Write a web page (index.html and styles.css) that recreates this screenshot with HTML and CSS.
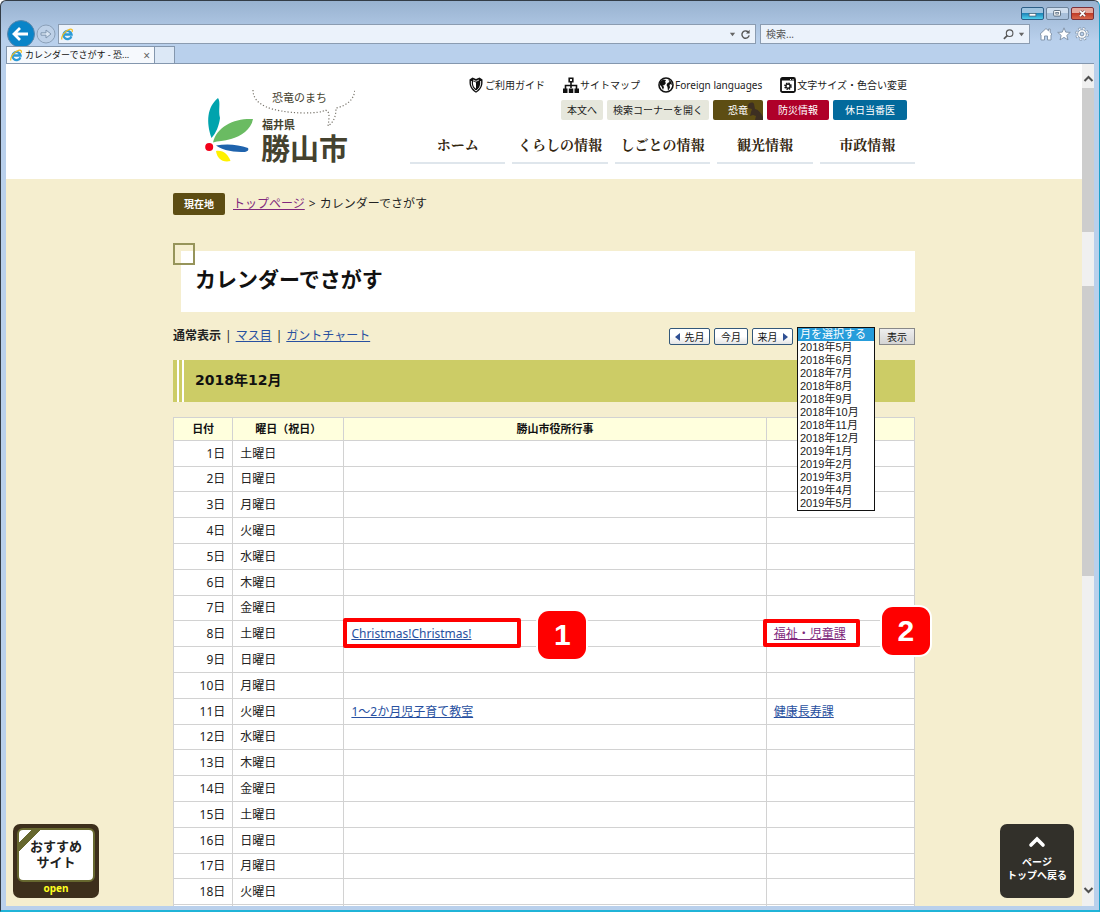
FILE: index.html
```html
<!DOCTYPE html>
<html lang="ja">
<head>
<meta charset="utf-8">
<title>カレンダーでさがす - 恐竜のまち 福井県勝山市</title>
<link rel="stylesheet" href="styles.css">
</head>
<body>
<svg class="defs" aria-hidden="true">
  <symbol id="ie" viewBox="0 0 16 16">
    <path d="M12.8 10.2A5 5 0 1 1 13 8H4.5" fill="none" stroke="#2b9ad6" stroke-width="2.8"/>
    <path d="M1.2 14.2C-.5 11 5 3 10.500 1.600c3-.7 4.200.8 3 3.200" fill="none" stroke="#f2bd22" stroke-width="1.500"/>
  </symbol>
</svg>
<div class="window">
  <div class="chrome">
    <div class="caption">
      <button class="cap cap-min" aria-label="最小化"><svg viewBox="0 0 24 13"><rect x="8" y="6.500" width="8" height="3" fill="#fff" stroke="#45596b" stroke-width=".8"/></svg></button>
      <button class="cap" aria-label="最大化"><svg viewBox="0 0 24 13"><rect x="7.500" y="3" width="8" height="6.500" rx="1" fill="#fff" stroke="#45596b"/><rect x="10" y="5.200" width="3" height="2" fill="#dbe6f2" stroke="#45596b" stroke-width=".8"/></svg></button>
      <button class="cap cap-close" aria-label="閉じる"><svg viewBox="0 0 24 13"><path d="M9 3.500l6 6M15 3.500l-6 6" stroke="#6b3a38" stroke-width="3.400"/><path d="M9 3.500l6 6M15 3.500l-6 6" stroke="#fff" stroke-width="2"/></svg></button>
    </div>
    <div class="address-row">
      <button class="back" aria-label="戻る"><svg viewBox="0 0 28 28"><circle cx="14" cy="14" r="13.500" fill="#0a84c8" stroke="#5a86aa"/><path d="M7 14h14M13 8l-6 6 6 6" fill="none" stroke="#fff" stroke-width="2.800"/></svg></button>
      <button class="forward" aria-label="進む"><svg viewBox="0 0 20 20"><circle cx="10" cy="10" r="9" fill="#bdd0e7" stroke="#8ba0b8"/><path d="M5 8.800h5V6l5 4-5 4v-2.800H5z" fill="#d8e4f2" stroke="#8197b0"/></svg></button>
      <div class="field address">
        <svg class="ie" aria-hidden="true"><use href="#ie"/></svg>
        <input type="text" aria-label="アドレス">
        <svg class="tiny" viewBox="0 0 8 8"><path d="M1 2h6L4 6z" fill="#666"/></svg>
        <svg class="glyph" viewBox="0 0 12 12"><path d="M9.500 4A4 4 0 1 0 10 7" fill="none" stroke="#555" stroke-width="1.500"/><path d="M10.500.8v4H6.600z" fill="#555"/></svg>
      </div>
      <div class="field search">
        <input type="text" placeholder="検索..." aria-label="検索">
        <svg class="glyph" viewBox="0 0 12 12"><circle cx="7.200" cy="4.600" r="3.600" fill="none" stroke="#555" stroke-width="1.200"/><path d="M4.600 7.200L1 10.800" stroke="#555" stroke-width="1.800"/></svg>
        <svg class="tiny" viewBox="0 0 8 8"><path d="M1 2h6L4 6z" fill="#666"/></svg>
      </div>
      <div class="tools">
        <svg viewBox="0 0 14 14"><path d="M1 7.200L7 1.500l2.500 2.300V2h1.700v3.500L13 7.200l-1 .8v5H8.500V9h-3v4H2V8z" fill="#fff" stroke="#8496ab"/></svg>
        <svg viewBox="0 0 14 14"><path d="M7 .8l1.700 4.300 4.600.3-3.500 3 1.200 4.500L7 10.400l-4 2.500 1.200-4.500-3.500-3 4.600-.3z" fill="#fff" stroke="#8496ab"/></svg>
        <svg viewBox="0 0 14 14"><circle cx="7" cy="7" r="5.400" fill="none" stroke="#8496ab" stroke-width="2.800" stroke-dasharray="2.400 1.840"/><circle cx="7" cy="7" r="5.200" fill="none" stroke="#fff" stroke-width="1.600" stroke-dasharray="1.800 2.280" stroke-dashoffset="-.3"/><circle cx="7" cy="7" r="4.300" fill="#fff" stroke="#8496ab" stroke-width=".8"/><circle cx="7" cy="7" r="1.900" fill="#b9cfea" stroke="#8496ab"/></svg>
      </div>
    </div>
    <div class="tabs">
      <div class="tab"><svg class="ie" aria-hidden="true"><use href="#ie"/></svg><span>カレンダーでさがす - 恐...</span><button aria-label="タブを閉じる">×</button></div>
      <button class="new-tab" aria-label="新しいタブ"></button>
    </div>
  </div>
  <div class="viewport">
    <div class="page">
      <header class="site-header">
        <div class="container header-in">
          <svg class="logo" viewBox="0 0 150 80" role="img" aria-label="恐竜のまち 福井県勝山市">
            <path d="M6.500 50C1 34 2 19 13 10c3 4 0 12 2 20-1 8-4 15-8.500 20z" fill="#00a3ad"/>
            <path d="M8 54.500C12 38 30 30 48 31 46 42 36 48 26 51 19 53 13 53 8 54.500z" fill="#6abb62"/>
            <circle cx="4.200" cy="59" r="4" fill="#f20019"/>
            <path d="M11 57.500c11-2 22-1 32 2.500 1 2 0 3-3 4-10 0-22-1-29-6.500z" fill="#1f63ad"/>
            <path d="M11 63c8-1 12 4 14.500 10C17 75 12 70 11 63z" fill="#fff100"/>
            <path d="M48 2C48 17 66 24 98 25q19 0 22-3c4 1 5 4 3 16 6-4 8-10 8-18 10-2 18-8 19-18" fill="none" stroke="#77736a" stroke-width="1.200" stroke-dasharray="1.200 2"/>
            <text class="logo-s" x="67" y="14">恐竜のまち</text>
            <text class="logo-m" x="57" y="41">福井県</text>
            <text class="logo-l" x="56" y="72">勝山市</text>
          </svg>
          <div class="header-nav">
            <div class="util">
              <a href="#"><svg viewBox="0 0 16 16"><path d="M8 15.800C3.500 13 1.800 10 1.500 6V2.500L4.500.5 8 2l3.500-1.500 3 2V6c-.3 4-2 7-6.500 9.800z" fill="#111"/><path d="M3.400 4v3c.3 2.800 1.800 5 4.600 7 2.800-2 4.300-4.200 4.600-7V4" fill="none" stroke="#fff" stroke-width=".9"/><path d="M5 4.200L8 5.500v6.200C6 10.400 5 8.700 5 6.500z" fill="#fff"/><path d="M5 3l3 1.300L11 3" fill="none" stroke="#fff" stroke-width=".8"/></svg>ご利用ガイド</a>
              <a href="#"><svg viewBox="0 0 16 16"><path d="M6.200 1.200h3.600v3.600H6.200zM8 5v6M2.500 12V8.500h11V12" fill="none" stroke="#111" stroke-width="1.600"/><path d="M0 11.500h4.500V16H0zM5.800 11.500h4.500V16H5.800zM11.500 11.500H16V16h-4.500z" fill="#111"/></svg>サイトマップ</a>
              <a href="#"><svg viewBox="0 0 16 16"><circle cx="8" cy="8" r="7" fill="#fff" stroke="#111" stroke-width="1.600"/><path d="M2 5l3-2.500 3 .5-1 2 1 1-2 2.500-1.500-.5L6 10l-1 3-1.500-3.500L2 8zM10 2l3.500 3 .5 3-1.500-1-1 1 .5 2.500L10 14 9.500 10 8.500 8l1-2 2-1z" fill="#111"/></svg>Foreign languages</a>
              <a href="#"><svg viewBox="0 0 16 16"><rect x="1" y="1" width="14" height="14" rx="1.500" fill="#fff" stroke="#111" stroke-width="1.800"/><path d="M1 2.500h14" stroke="#111" stroke-width="2"/><path d="M10 2.500h1M12.500 2.500h1" stroke="#fff"/><circle cx="8" cy="9.200" r="2.700" fill="none" stroke="#111" stroke-width="2.200" stroke-dasharray="1.300 .82"/><circle cx="8" cy="9.200" r="2" fill="#fff" stroke="#111" stroke-width="1.200"/></svg>文字サイズ・色合い変更</a>
            </div>
            <div class="pills">
              <a class="pill" href="#">本文へ</a>
              <a class="pill" href="#">検索コーナーを開く</a>
              <a class="pill dino" href="#"><svg viewBox="0 0 16 20" aria-hidden="true"><path d="M1 5c2-3 5-3 6-1l1 5c4 1 6 4 8 8v3H8l1-4-3-1-3 1 1-4 1-3-4-1z" fill="#3d2f22"/></svg><span>恐竜</span></a>
              <a class="pill red" href="#">防災情報</a>
              <a class="pill blue" href="#">休日当番医</a>
            </div>
            <nav class="global">
              <a href="#">ホーム</a><a href="#">くらしの情報</a><a href="#">しごとの情報</a><a href="#">観光情報</a><a href="#">市政情報</a>
            </nav>
          </div>
        </div>
      </header>
      <main class="container main">
        <div class="crumbs"><span class="here">現在地</span><a class="visited" href="#">トップページ</a><span>&gt;</span><span>カレンダーでさがす</span></div>
        <h1>カレンダーでさがす</h1>
        <div class="controls">
          <div class="views"><strong>通常表示</strong><span>|</span><a href="#">マス目</a><span>|</span><a href="#">ガントチャート</a></div>
          <form class="months">
            <button class="month prev" type="button">先月</button>
            <button class="month" type="button">今月</button>
            <button class="month next" type="button">来月</button>
            <div class="picker">
              <select size="14" aria-label="月を選択する">
                <option selected>月を選択する</option>
                <option>2018年5月</option><option>2018年6月</option><option>2018年7月</option><option>2018年8月</option><option>2018年9月</option><option>2018年10月</option><option>2018年11月</option><option>2018年12月</option><option>2019年1月</option><option>2019年2月</option><option>2019年3月</option><option>2019年4月</option><option>2019年5月</option>
              </select>
            </div>
            <button class="show" type="button">表示</button>
          </form>
        </div>
        <h2>2018年12月</h2>
        <table>
          <colgroup><col class="c-date"><col class="c-day"><col class="c-event"><col class="c-dept"></colgroup>
          <thead><tr><th>日付</th><th>曜日（祝日）</th><th>勝山市役所行事</th><th></th></tr></thead>
          <tbody>
            <tr><td>1日</td><td>土曜日</td><td></td><td></td></tr>
            <tr><td>2日</td><td>日曜日</td><td></td><td></td></tr>
            <tr><td>3日</td><td>月曜日</td><td></td><td></td></tr>
            <tr><td>4日</td><td>火曜日</td><td></td><td></td></tr>
            <tr><td>5日</td><td>水曜日</td><td></td><td></td></tr>
            <tr><td>6日</td><td>木曜日</td><td></td><td></td></tr>
            <tr><td>7日</td><td>金曜日</td><td></td><td></td></tr>
            <tr><td>8日</td><td>土曜日</td><td><a href="#">Christmas!Christmas!</a><span class="frame frame-event"></span><span class="badge badge-event">1</span></td><td><a class="visited" href="#">福祉・児童課</a><span class="frame frame-dept"></span><span class="badge badge-dept">2</span></td></tr>
            <tr><td>9日</td><td>日曜日</td><td></td><td></td></tr>
            <tr><td>10日</td><td>月曜日</td><td></td><td></td></tr>
            <tr><td>11日</td><td>火曜日</td><td><a href="#">1～2か月児子育て教室</a></td><td><a href="#">健康長寿課</a></td></tr>
            <tr><td>12日</td><td>水曜日</td><td></td><td></td></tr>
            <tr><td>13日</td><td>木曜日</td><td></td><td></td></tr>
            <tr><td>14日</td><td>金曜日</td><td></td><td></td></tr>
            <tr><td>15日</td><td>土曜日</td><td></td><td></td></tr>
            <tr><td>16日</td><td>日曜日</td><td></td><td></td></tr>
            <tr><td>17日</td><td>月曜日</td><td></td><td></td></tr>
            <tr><td>18日</td><td>火曜日</td><td></td><td></td></tr>
            <tr><td></td><td></td><td></td><td></td></tr>
          </tbody>
        </table>
      </main>
      <button class="recommend"><span class="rec-card">おすすめ<br>サイト</span><span class="rec-open">open</span></button>
      <a class="to-top" href="#"><svg viewBox="0 0 18 12"><path d="M3 9l6-6 6 6" fill="none" stroke="#fff" stroke-width="3.600" stroke-linecap="round"/></svg>ページ<br>トップへ戻る</a>
    </div>
    <div class="scrollbar">
      <svg viewBox="0 0 11 8"><path d="M1.500 6l4-4 4 4" fill="none" stroke="#505050" stroke-width="2"/></svg>
      <div class="track"><span class="thumb"></span><span class="thumb"></span></div>
      <svg viewBox="0 0 11 8"><path d="M1.500 2l4 4 4-4" fill="none" stroke="#505050" stroke-width="2"/></svg>
    </div>
  </div>
</div>
</body>
</html>
```

FILE: styles.css
```css
*, *::before, *::after { box-sizing: border-box; }
body {
  margin: 0;
  font: 12px/18px "Noto Sans", "Noto Sans CJK JP", sans-serif;
  color: #222;
}
button { padding: 0; border: 0; background: none; font-family: inherit; }
a { color: #2850a0; }
a.visited { color: #80287c; }
svg { display: block; flex: none; }
.defs { position: absolute; width: 0; height: 0; }

/* browser window */
.window {
  display: flex;
  flex-direction: column;
  height: 100vh;
  padding: 0 5px 4px;
  border: 1px solid #333c46;
  border-bottom: 2px solid #20b4d8;
  border-right-color: #20a0c8;
  border-radius: 6px 6px 0 0;
  background: linear-gradient(#98b2d0, #b9d0ec 40px);
}
.chrome { padding-top: 6px; }
.caption { display: flex; justify-content: flex-end; gap: 2px; height: 17px; }
.cap {
  width: 23px;
  height: 13px;
  border: 1px solid #6c829a;
  border-radius: 2px;
  background: linear-gradient(#cfdeee 50%, #a8c0da 50%);
}
.cap svg { width: 100%; height: 100%; }
.cap-min { background: linear-gradient(#9fc4e0 45%, #1f86b8 50%, #4fd0ee); border-color: #2c5e86; }
.cap-close { background: linear-gradient(#e5a79b 45%, #c13c28 50%, #d8684c); border-color: #7c3038; }
.address-row { display: flex; align-items: center; height: 20px; }
.back svg { width: 28px; height: 28px; }
.back { margin-left: 1px; }
.forward { margin: 0 2px 0 1px; }
.forward svg { width: 20px; height: 20px; }
.field {
  display: flex;
  align-items: center;
  gap: 4px;
  height: 20px;
  padding: 0 4px 0 2px;
  border: 1px solid #8b9cb1;
  background: #ebf2fb;
}
.field input {
  flex: 1;
  min-width: 0;
  padding: 0 3px;
  border: 0;
  background: none;
  font: 10px/16px "Noto Sans", "Noto Sans CJK JP", sans-serif;
}
.field input::placeholder { color: #555; }
.address { flex: 1; }
.search { width: 270px; margin-left: 4px; }
.ie { width: 13px; height: 13px; }
.tiny { width: 7px; height: 7px; }
.glyph { width: 11px; height: 11px; }
.tools { display: flex; gap: 4px; margin: 0 5px 0 9px; }
.tools svg { width: 14px; height: 14px; }
.tabs { display: flex; height: 20px; padding-top: 2px; border-bottom: 1px solid #8497ae; }
.tab {
  position: relative;
  z-index: 1;
  display: flex;
  align-items: center;
  gap: 2px;
  width: 149px;
  padding: 0 4px 0 3px;
  border: 1px solid #8497ae;
  border-bottom: 0;
  background: #f6f9fd;
  font-size: 9px;
  white-space: nowrap;
  color: #111;
}
.tab button { margin-left: auto; color: #666; font-size: 12px; }
.new-tab { width: 20px; border: 1px solid #8497ae; border-width: 1px 1px 0 0; background: #dce8f6; }

/* scrolled area */
.viewport { display: flex; flex: 1; min-height: 0; overflow: hidden; }
.page { position: relative; flex: 1; min-width: 0; overflow: hidden; background: #f5eecf; }
.scrollbar {
  display: flex;
  flex-direction: column;
  align-items: center;
  width: 12px;
  padding: 11px 0 12px;
  background: #f0f0f0;
}
.scrollbar svg { width: 11px; height: 8px; }
.track { display: flex; flex: 1; flex-direction: column; gap: 54px; width: 100%; padding-top: 5px; }
.thumb { height: 144px; background: #cdcdcd; }
.thumb + .thumb { height: 290px; }

/* site header */
.container { width: 100%; max-width: 742px; margin: 0 auto; }
.site-header { background: #fff; }
.header-in { display: flex; justify-content: space-between; height: 115px; padding-left: 32px; }
.logo { width: 150px; height: 80px; margin-top: 24px; }
.logo text { font-family: "Noto Sans CJK JP", sans-serif; fill: #45422f; }
.logo-s { font-size: 11px; }
.logo-m { font-size: 11px; font-weight: 700; }
.logo-l { font-size: 29px; font-weight: 700; }
.header-nav { display: flex; flex-direction: column; width: 505px; padding-top: 13px; }
.util, .pills { display: flex; justify-content: flex-end; padding-right: 8px; }
.util { gap: 18px; font-size: 10px; line-height: 16px; }
.util a { display: flex; gap: 1px; color: #222; text-decoration: none; white-space: nowrap; }
.util svg { width: 16px; height: 16px; }
.pills { gap: 4px; margin-top: 7px; font-size: 10px; line-height: 20px; }
.pill { position: relative; padding: 0 6px; border-radius: 2px; background: #e6e7dc; color: #222; text-decoration: none; white-space: nowrap; }
.dino { padding: 0 15px; background: #5d4d13; color: #fff; }
.dino svg { position: absolute; right: 0; top: 0; width: 16px; height: 20px; }
.dino span { position: relative; }
.red { padding: 0 11px; background: #af0029; color: #fff; }
.blue { padding: 0 12px; background: #036a9c; color: #fff; }
.global { display: grid; grid-template-columns: repeat(5, 1fr); gap: 7px; margin-top: 12px; }
.global a {
  padding-bottom: 6px;
  border-bottom: 2px solid #dfe6ec;
  color: #33260f;
  font: 700 14px/24px "Noto Serif CJK JP", "Noto Sans CJK JP", serif;
  text-align: center;
  text-decoration: none;
}

/* main column */
.crumbs { display: flex; align-items: center; gap: 4px; padding-top: 14px; line-height: 20px; }
.here { margin-right: 4px; padding: 0 11px; border-radius: 2px; background: #5d4d13; color: #fff; font-size: 10px; font-weight: 700; line-height: 22px; }
h1 {
  position: relative;
  margin: 36px 0 0 8px;
  padding: 14px 14px 19px;
  background: #fff;
  color: #111;
  font-size: 21px;
  line-height: 28px;
}
h1::before { content: ""; position: absolute; left: -8px; top: -8px; width: 22px; height: 22px; border: 2px solid #96945a; }
.controls { display: flex; justify-content: space-between; height: 48px; padding-top: 14px; }
.views { display: flex; gap: 4px; line-height: 20px; }
.months { display: flex; gap: 4px; padding-top: 2px; }
.month, .show {
  display: flex;
  align-items: center;
  justify-content: center;
  gap: 5px;
  width: 34px;
  height: 17px;
  border: 1px solid #33587a;
  border-radius: 2px;
  background: linear-gradient(#fff 50%, #e4e4e4);
  color: #111;
  font-size: 10px;
}
.prev, .next { width: 41px; }
.prev::before, .next::after { content: ""; border: 4px solid transparent; }
.prev::before { border-left: 0; border-right: 5px solid #2f4f93; }
.next::after { border-right: 0; border-left: 5px solid #2f4f93; }
.show { width: 36px; border-color: #888; border-radius: 0; background: linear-gradient(#eee, #d4d4d4); }
.picker { position: relative; width: 78px; height: 17px; }
select {
  position: absolute;
  z-index: 2;
  left: 0;
  top: -1px;
  width: 78px;
  height: 184px;
  padding: 0;
  border: 1px solid #111;
  outline: 0;
  border-radius: 0;
  overflow: hidden;
  background: #fff;
  color: #222;
  font: 11px/13px "Liberation Sans", "Noto Sans CJK JP", sans-serif;
}
option { display: flex; align-items: center; min-height: 13px; height: 13px; padding: 0 2px 3px; line-height: 13px; }
option:checked { background: #269ddb linear-gradient(#269ddb, #269ddb); color: #fff; }
h2 {
  margin: 0;
  padding: 0 22px 2px;
  background: linear-gradient(90deg, #cccc66 4px, #fff 4px 6px, #cccc66 6px 9px, #fff 9px 11px, #cccc66 11px);
  color: #111;
  font: 700 14px/40px "DejaVu Sans", "Noto Sans CJK JP", sans-serif;
}
table { width: 100%; margin-top: 15px; border: 1px solid #bbb; border-collapse: collapse; table-layout: fixed; background: #fff; }
.c-date { width: 8%; }
.c-day { width: 15%; }
.c-event { width: 57%; }
.c-dept { width: 20%; }
th, td { position: relative; height: 26px; padding: 0 7px; border: 1px solid #d2d2d2; text-align: left; line-height: 20px; }
th { height: 23px; padding: 0 4px; background: #ffffdd; color: #111; font-size: 11px; text-align: center; }
td:first-child { text-align: right; }
tbody tr:nth-child(5n+2) td { height: 25px; }

/* annotations over the table */
.frame { position: absolute; border: 4px solid #f00; border-radius: 2px; }
.frame-event { left: -1px; top: -3px; width: 178px; height: 30px; }
.frame-dept { left: -4px; top: -2px; width: 97px; height: 28px; }
.badge {
  position: absolute;
  z-index: 1;
  width: 48px;
  height: 48px;
  border-radius: 11px;
  background: #f00;
  box-shadow: 0 0 0 2px #fff;
  color: #fff;
  font: 700 30px/48px "Liberation Sans", sans-serif;
  text-align: center;
}
.badge-event { left: 194px; top: -10px; }
.badge-dept { left: 115px; top: -14px; }

/* floating buttons */
.recommend {
  position: absolute;
  left: 7px;
  bottom: 8px;
  width: 86px;
  padding: 4px 4px 3px;
  border-radius: 7px;
  background: #3d2f1c;
}
.rec-card {
  display: block;
  padding: 8px 0 10px;
  border: 2px solid #67682f;
  border-radius: 6px;
  background: linear-gradient(135deg, #fff 9px, #67682f 9px 15px, #fff 15px);
  color: #222;
  font-size: 13px;
  font-weight: 700;
  line-height: 16px;
}
.rec-open { display: block; color: #ffff20; font-size: 10px; font-weight: 700; line-height: 13px; }
.to-top {
  position: absolute;
  right: 8px;
  bottom: 8px;
  width: 74px;
  padding: 12px 0 16px;
  border-radius: 7px;
  background: #32302a;
  color: #fff;
  font-size: 10px;
  font-weight: 700;
  line-height: 13px;
  text-align: center;
  text-decoration: none;
}
.to-top svg { width: 18px; height: 12px; margin: 0 auto 8px; }
```
